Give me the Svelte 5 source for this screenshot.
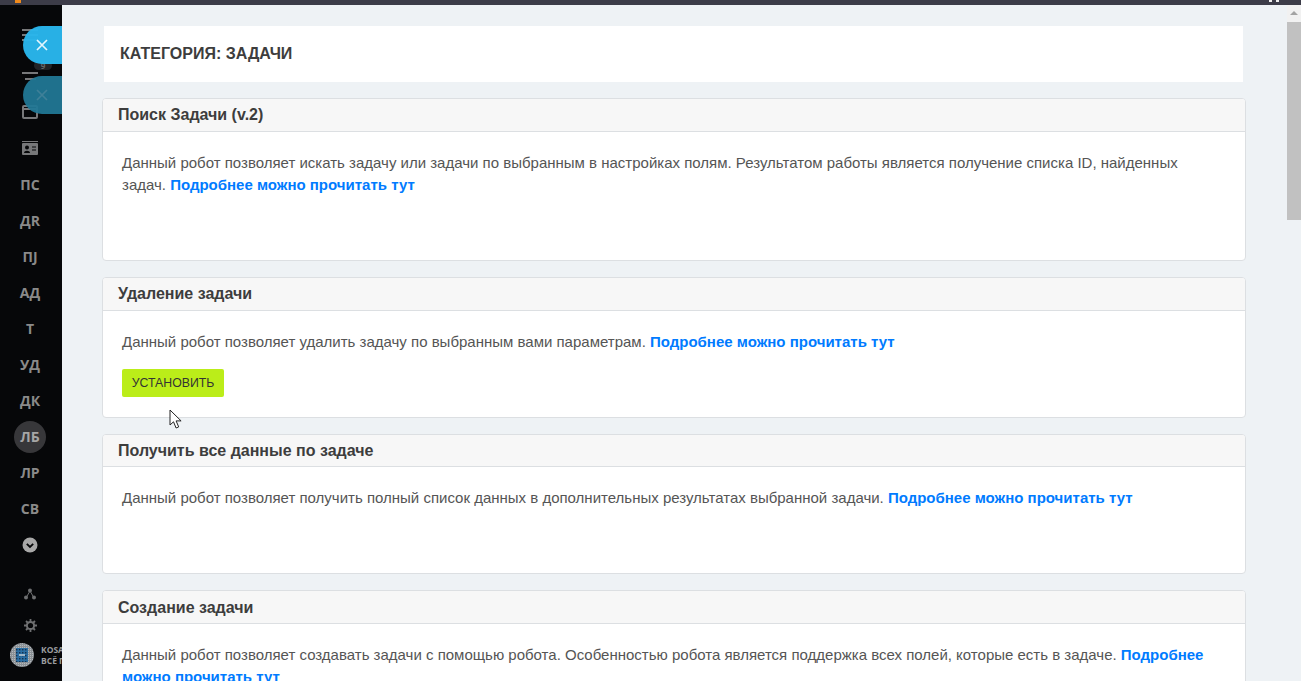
<script>
  const initials = ["ПС", "ДR", "ПJ", "АД", "Т", "УД", "ДК", "ЛБ", "ЛР", "СВ"];
  const robots = [
    { title: "Поиск Задачи (v.2)", text: "Данный робот позволяет искать задачу или задачи по выбранным в настройках полям. Результатом работы является получение списка ID, найденных задач.", size: "tall" },
    { title: "Удаление задачи", text: "Данный робот позволяет удалить задачу по выбранным вами параметрам.", install: true },
    { title: "Получить все данные по задаче", text: "Данный робот позволяет получить полный список данных в дополнительных результатах выбранной задачи.", size: "mid" },
    { title: "Создание задачи", text: "Данный робот позволяет создавать задачи с помощью робота. Особенностью робота является поддержка всех полей, которые есть в задаче." }
  ];
</script>

<div class="screen">
  <div class="topbar"><span class="tab-dot"></span><span class="tray"></span></div>
  <div class="body">
    <aside class="sidebar">
      <div class="nav">
        <div class="nav-item first">
          <svg width="16" height="14" viewBox="0 0 16 14" fill="#77787a"><rect width="16" height="2" y="1"/><rect width="16" height="2" y="6"/><rect width="16" height="2" y="11"/></svg>
        </div>
        <div class="nav-item filter">
          <svg width="16" height="14" viewBox="0 0 16 14" fill="#77787a"><rect width="16" height="2" y="4"/><rect x="3" width="11" height="2" y="10"/></svg>
          <span class="count">9</span>
        </div>
        <div class="nav-item">
          <svg width="16" height="14" viewBox="0 0 16 14" fill="none" stroke="#77787a" stroke-width="2"><rect x="1" y="1" width="14" height="12" rx="1"/><path d="M1 4h14"/></svg>
        </div>
        <div class="nav-item filter">
          <svg width="16" height="14" viewBox="0 0 16 14"><rect y="2" width="16" height="12" rx="1" fill="#77787a"/><rect y="0" width="16" height="1" fill="#77787a"/><circle cx="5" cy="6.5" r="2" fill="#060709"/><path d="M2 12c0-3 6-3 6 0z" fill="#060709"/><path d="M10 6h4M10 9h4" stroke="#060709"/></svg>
        </div>
        {#each initials as label}
          <div class="nav-item" class:active={label === "ЛБ"}><span>{label}</span></div>
        {/each}
        <div class="nav-item">
          <svg width="16" height="16" viewBox="0 0 16 16"><circle cx="8" cy="8" r="7.5" fill="#a8a8a8"/><path d="M4.8 6.8 8 10l3.2-3.2" fill="none" stroke="#060709" stroke-width="1.8"/></svg>
        </div>
      </div>
      <div class="tools">
        <svg width="12" height="12" viewBox="0 0 12 12"><g fill="#6e6f71"><circle cx="6" cy="2.4" r="2"/><circle cx="2" cy="9.6" r="2"/><circle cx="10" cy="9.6" r="2"/></g><path d="M6 3 2.5 9M6 3l3.5 6" stroke="#6e6f71"/></svg>
        <svg width="13" height="13" viewBox="0 0 13 13"><circle cx="6.5" cy="6.5" r="3.6" fill="none" stroke="#6e6f71" stroke-width="2"/><path d="M6.5 0v3M6.5 10v3M0 6.5h3M10 6.5h3M2 2l2 2M9 9l2 2M11 2 9 4M4 9l-2 2" stroke="#6e6f71" stroke-width="1.8"/></svg>
      </div>
      <div class="brand">
        <svg class="brand-logo" width="24" height="24" viewBox="0 0 24 24">
          <defs>
            <pattern id="dots" width="2" height="2" patternUnits="userSpaceOnUse"><rect width="2" height="2" fill="#8b9196"/><rect width="1" height="1" fill="#b4b8bb"/></pattern>
            <pattern id="mesh" width="3" height="3" patternUnits="userSpaceOnUse"><rect width="3" height="3" fill="#2a6ea3"/><rect width="1.4" height="1.4" fill="#16324f"/></pattern>
          </defs>
          <circle cx="12" cy="12" r="12" fill="url(#dots)"/>
          <rect x="6" y="5" width="12" height="14" fill="url(#mesh)"/>
          <path d="M9 11h6v2H9z" fill="#9fb6c8"/>
        </svg>
        <div class="brand-text"><span>KOSATKA</span><span>ВСЁ ПРОСТО</span></div>
      </div>
    </aside>

    <main class="content">
      <div class="category">КАТЕГОРИЯ: ЗАДАЧИ</div>
      {#each robots as robot}
        <section class="card">
          <h3>{robot.title}</h3>
          <div class="card-body {robot.size ?? ''}">
            <p>{robot.text} <a href="#more">Подробнее можно прочитать тут</a></p>
            {#if robot.install}
              <button>УСТАНОВИТЬ</button>
            {/if}
          </div>
        </section>
      {/each}
    </main>

    <div class="scrollbar">
      <div class="arrow"></div>
      <div class="thumb"></div>
    </div>
  </div>

  <button class="bubble" aria-label="Закрыть">
    <svg width="12" height="12" viewBox="0 0 12 12"><path d="M1 1l10 10M11 1 1 11" stroke="#e4f6fd" stroke-width="1.7"/></svg>
  </button>
  <button class="bubble second" aria-label="Закрыть">
    <svg width="12" height="12" viewBox="0 0 12 12"><path d="M1 1l10 10M11 1 1 11" stroke="#3f8098" stroke-width="1.7"/></svg>
  </button>

  <svg class="cursor" width="14" height="21" viewBox="0 0 14 21"><path d="M1 1v15l3.5-3.2 2.6 6.2 2.6-1.1-2.6-6h5z" fill="#fff" stroke="#222" stroke-width="1"/></svg>
</div>

<style>
  :global(body) {
    margin: 0;
    overflow: hidden;
  }

  .screen {
    position: relative;
    height: 681px;
    overflow: hidden;
    display: flex;
    flex-direction: column;
    font-family: "Liberation Sans", Arial, sans-serif;
    background: #eef2f5;
  }

  .topbar {
    position: relative;
    height: 5px;
    flex: none;
    background: #3c3c48;
  }

  .tab-dot {
    position: absolute;
    left: 15px;
    top: 0;
    width: 6px;
    height: 3px;
    background: #f08a1c;
  }

  .tray {
    position: absolute;
    left: 1269px;
    top: 0;
    width: 10px;
    height: 2px;
    background: linear-gradient(90deg, #eee 0 3px, transparent 3px 7px, #eee 7px);
  }

  .body {
    flex: 1;
    display: flex;
    min-height: 0;
  }

  .sidebar {
    width: 62px;
    flex: none;
    background: #060709;
    display: flex;
    flex-direction: column;
    padding-top: 14px;
    box-sizing: border-box;
    color: #8a8a8a;
  }

  .nav {
    display: flex;
    flex-direction: column;
    align-items: center;
    padding-right: 2px;
  }

  .nav-item {
    position: relative;
    width: 32px;
    height: 32px;
    margin-bottom: 4px;
    display: flex;
    align-items: center;
    justify-content: center;
    font-family: "Open Sans", sans-serif;
    font-size: 14px;
    font-weight: 700;
    border-radius: 50%;
  }

  .nav-item span:not(.count) {
    padding-bottom: 2px;
  }

  .nav-item.first {
    margin-bottom: 8px;
  }

  .nav-item.filter {
    margin-bottom: 5px;
  }

  .nav-item.active {
    background: #37373a;
    color: #a6a6a6;
  }

  .count {
    position: absolute;
    right: -6px;
    top: 2px;
    width: 18px;
    height: 9px;
    border-radius: 5px;
    background: #222326;
    font-size: 8px;
    line-height: 9px;
    text-align: center;
    color: #666;
  }

  .tools {
    display: flex;
    flex-direction: column;
    align-items: center;
    gap: 19px;
    margin-top: 23px;
    padding-right: 2px;
  }

  .brand {
    display: flex;
    align-items: center;
    gap: 7px;
    margin-top: 11px;
    padding-left: 10px;
    overflow: hidden;
  }

  .brand-logo {
    flex: none;
  }

  .brand-text {
    display: flex;
    flex-direction: column;
    font-family: "Open Sans", sans-serif;
    font-size: 8.5px;
    line-height: 11px;
    font-weight: 700;
    white-space: nowrap;
    color: #9a9c9f;
  }

  .content {
    flex: 1;
    min-width: 0;
    padding: 21px 41px 0 40px;
    overflow: hidden;
  }

  .category {
    height: 56px;
    margin: 0 3px 16px 2px;
    padding-left: 16px;
    background: #fff;
    display: flex;
    align-items: center;
    font-size: 16px;
    font-weight: 700;
    color: #3d3d3d;
  }

  .card {
    background: #fff;
    border: 1px solid #dcdfe2;
    border-radius: 4px;
    margin-bottom: 16px;
    overflow: hidden;
  }

  h3 {
    margin: 0;
    height: 32px;
    padding-left: 15px;
    background: #f7f7f7;
    border-bottom: 1px solid #dcdfe2;
    font-size: 16px;
    line-height: 32px;
    font-weight: 700;
    color: #3d3d3d;
  }

  .card:nth-of-type(3) h3 {
    height: 31px;
  }

  .card:nth-of-type(4) h3 {
    line-height: 34px;
  }

  .card-body {
    padding: 20px 22px 20px 19px;
  }

  .card-body.tall {
    height: 88px;
  }

  .card-body.mid {
    height: 66px;
  }

  p {
    margin: 0;
    font-size: 15px;
    line-height: 22px;
    color: #555;
  }

  a {
    color: #007bff;
    font-weight: 700;
    text-decoration: none;
  }

  .card-body button {
    display: block;
    margin-top: 16px;
    width: 102px;
    height: 28px;
    padding: 0;
    border: 0;
    border-radius: 2px;
    background: #bbed19;
    font: 12.3px "Liberation Sans", Arial, sans-serif;
    color: #333;
  }

  .scrollbar {
    width: 14px;
    flex: none;
  }

  .arrow {
    height: 17px;
    background: #f1f1f1;
    position: relative;
  }

  .arrow::after {
    content: "";
    position: absolute;
    left: 3px;
    top: 6px;
    border: 4px solid transparent;
    border-top: 0;
    border-bottom: 4px solid #a3a3a3;
  }

  .thumb {
    height: 198px;
    background: #c1c1c1;
  }

  .bubble {
    position: absolute;
    left: 23px;
    top: 26px;
    width: 39px;
    height: 38px;
    padding: 0 2px 0 0;
    border: 0;
    border-radius: 19px 0 0 19px;
    background: rgba(41, 182, 236, 0.97);
    display: flex;
    align-items: center;
    justify-content: center;
  }

  .bubble.second {
    top: 76px;
    background: rgba(33, 120, 150, 0.94);
  }

  .cursor {
    position: absolute;
    left: 169px;
    top: 409px;
  }
</style>
